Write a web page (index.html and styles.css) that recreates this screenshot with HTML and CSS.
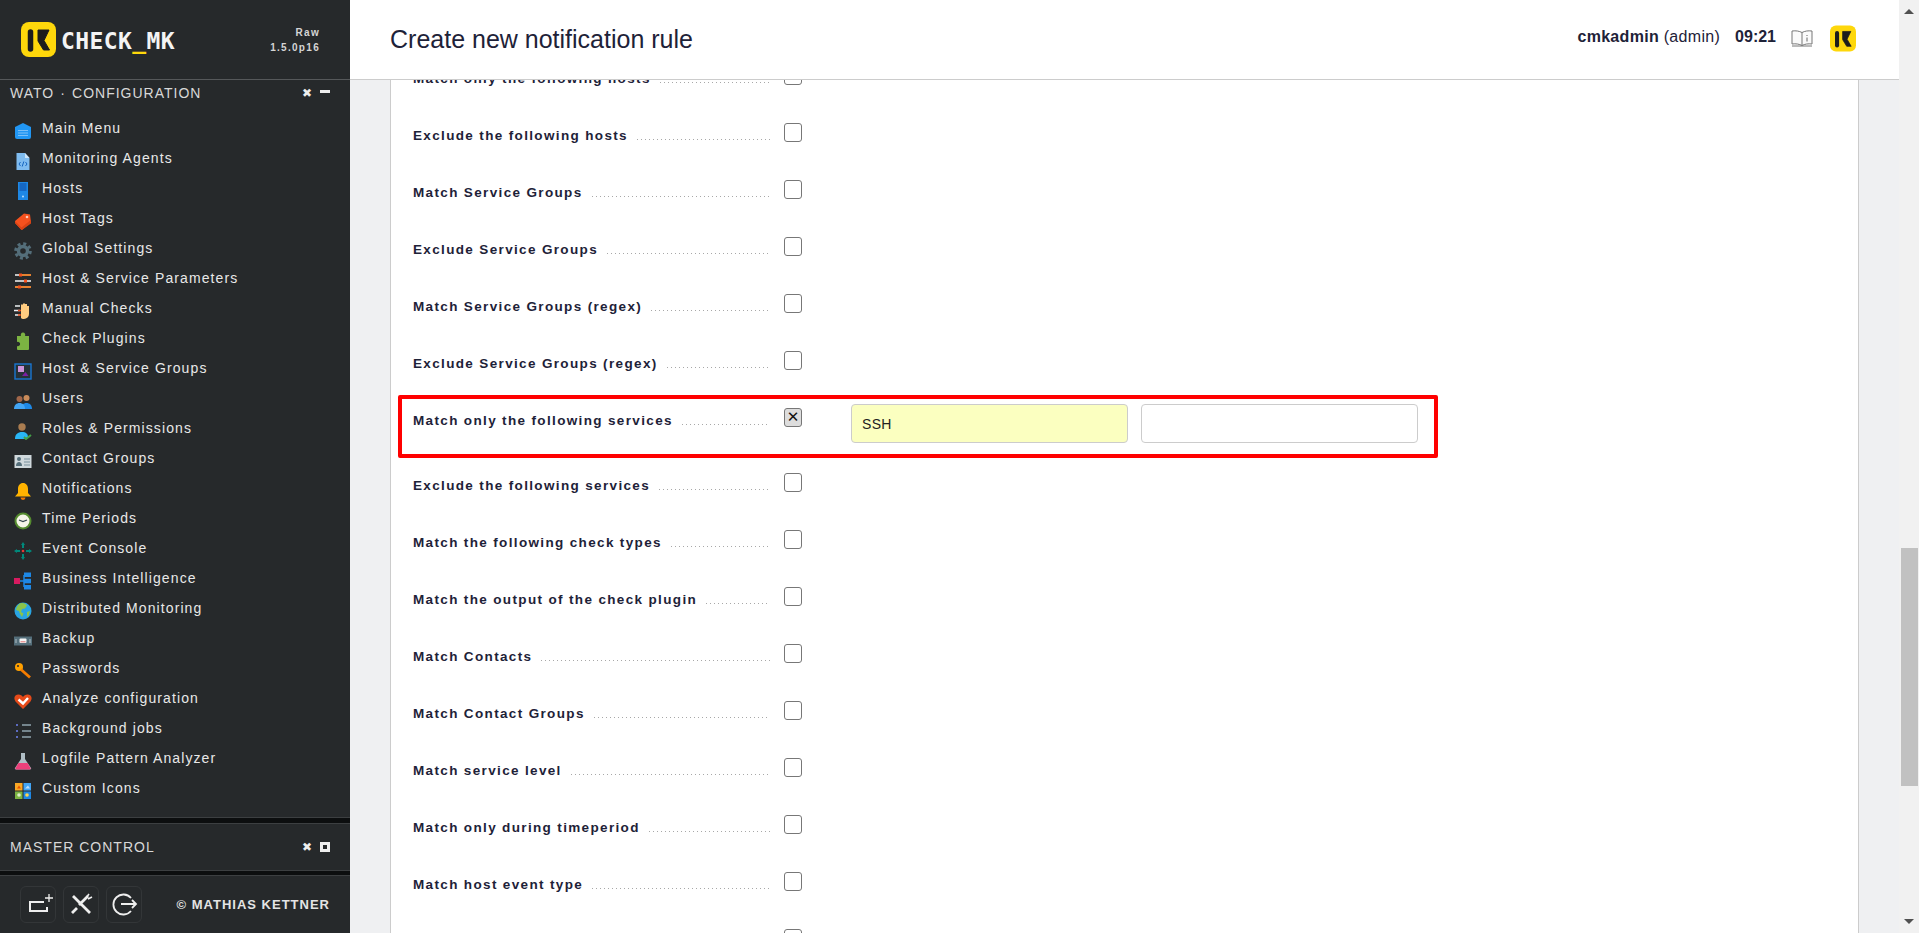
FILE: index.html
```html
<!DOCTYPE html>
<html lang="en">
<head>
  <meta charset="UTF-8" />
  <title>Create new notification rule</title>
  <link rel="stylesheet" href="styles.css">
</head>
<body>
  <aside class="sidebar">
    <div class="side-header">
      <svg class="logo" viewBox="0 0 35 35"><rect width="35" height="35" rx="8" fill="#fed70b"/><path d="M9.500 10v17" stroke="#1c1c1c" stroke-width="5.500" stroke-linecap="round"/><path d="M17 8h11l-5 10.500L28.500 28h-6L17 19z" fill="#1c1c1c" stroke="#1c1c1c" stroke-linejoin="round"/></svg>
      <div class="logo-text">CHECK<span class="logo-under">_</span>MK</div>
      <div class="version">Raw<br>1.5.0p16</div>
    </div>

    <div class="snapin-title">
      <span class="wato-title">WATO · CONFIGURATION</span>
      <span class="snapin-ctrl"><span class="ctrl-x">✖</span><span class="ctrl-min"></span></span>
    </div>

    <ul class="menu">
      <li><svg viewBox="0 0 18 18"><path d="M9 1l8 4v10a2 2 0 0 1-2 2H3a2 2 0 0 1-2-2V5z" fill="#2196f3"/><path d="M4 8.500h10M4 11h10M4 13.500h10" stroke="#7cc0f7"/></svg>Main Menu</li>
      <li><svg viewBox="0 0 18 18"><path d="M2.500 1H11l4.500 5v12h-13z" fill="#7fbcf0"/><path d="M11 1l4.500 5H11z" fill="#cfe6fa"/><path d="M6.500 10L5 12l1.500 2M11.500 10L13 12l-1.500 2M9.800 9.500l-1.600 5" stroke="#1565c0" fill="none"/></svg>Monitoring Agents</li>
      <li><svg viewBox="0 0 18 18"><rect x="4" y="0" width="10" height="18" fill="#1e88e5"/><path d="M5.500 2h7M5.500 4h7M5.500 6h7M5.500 8h7" stroke="#0d47a1"/><circle cx="9" cy="14.500" r="1" fill="#bbdefb"/></svg>Hosts</li>
      <li><svg viewBox="0 0 18 18"><path d="M1 9l9-7.500 6 1 1 8L8.500 17.500a1 1 0 0 1-1.400 0L1 11z" fill="#f4511e"/><path d="M1 9l6.500 6.500L16.800 8l.2 3.500-8.500 6a1 1 0 0 1-1.400 0L1 11z" fill="#d84315"/><circle cx="13" cy="5" r="1.300" fill="#ffccbc"/></svg>Host Tags</li>
      <li><svg viewBox="0 0 18 18"><circle cx="9" cy="9" r="7.300" fill="none" stroke="#546e7a" stroke-width="3" stroke-dasharray="3 2.730"/><circle cx="9" cy="9" r="4.500" fill="none" stroke="#546e7a" stroke-width="3.400"/></svg>Global Settings</li>
      <li><svg viewBox="0 0 18 18"><path d="M1 3h4M8 3h9M1 9h9M13 9h4M1 15h3M7 15h10" stroke="#f5f5f5" stroke-width="1.500"/><path d="M5 3h3M10 9h3M4 15h3" stroke="#f4511e" stroke-width="3"/><path d="M8 3h9M1 15h3M7 15h10" stroke="#ef6c00" stroke-width="1.500"/></svg>Host &amp; Service Parameters</li>
      <li><svg viewBox="0 0 18 18"><path d="M7 6V2.500h2V5V1.500h2V5V2h2v3.500V4h2v8a5 5 0 0 1-5 5H9a3 3 0 0 1-2-1z" fill="#ffcc80"/><path d="M1 4h5M0 8.500h6M1 13h5" stroke="#eceff1" stroke-width="1.500"/><path d="M4 8.500h3M4 13h3" stroke="#e64a19" stroke-width="1.500"/></svg>Manual Checks</li>
      <li><svg viewBox="0 0 18 18"><path d="M7 4a2.300 2.300 0 1 1 4 0h4v13a1 1 0 0 1-1 1H4a1 1 0 0 1-1-1v-3a2.200 2.200 0 1 0 0-4V4z" fill="#7cb342"/></svg>Check Plugins</li>
      <li><svg viewBox="0 0 18 18"><rect x="1" y="2" width="16" height="15" fill="#263238" stroke="#1976d2" stroke-width="1.400"/><rect x="4" y="4" width="6" height="6" fill="#ce93d8"/><path d="M8 14l3.500-4 3 4z" fill="#7b1fa2"/></svg>Host &amp; Service Groups</li>
      <li><svg viewBox="0 0 18 18"><circle cx="5.500" cy="7" r="3" fill="#a1674a"/><circle cx="12.500" cy="6" r="3" fill="#c98b5a"/><path d="M7 17c0-4 2.500-6 5.500-6s5.500 2 5.500 6z" fill="#1e88e5"/><path d="M0 17c0-4 2.500-6 5.500-6S11 13 11 17z" fill="#42a5f5"/></svg>Users</li>
      <li><svg viewBox="0 0 18 18"><circle cx="8" cy="5" r="3.700" fill="#a97c50"/><path d="M1 17c0-5 3-7 7-7s6 2 6 5l-3 2z" fill="#29b6f6"/><path d="M10 15l2 2 5-4" stroke="#43a047" stroke-width="2" fill="none"/></svg>Roles &amp; Permissions</li>
      <li><svg viewBox="0 0 18 18"><rect x="0.500" y="3" width="17" height="13" fill="#cfd8dc"/><circle cx="5" cy="7" r="2" fill="#546e7a"/><path d="M2 14c0-3 1.500-4 3-4s3 1 3 4z" fill="#546e7a"/><path d="M10 7h6M10 10h6M10 13h6" stroke="#78909c"/></svg>Contact Groups</li>
      <li><svg viewBox="0 0 18 18"><path d="M9 1c3 0 5 2.500 5 6v4l3 3.500H1L4 11V7c0-3.500 2-6 5-6z" fill="#ffb300"/><path d="M6.500 15.500h5a2.500 2.500 0 0 1-5 0z" fill="#f57c00"/></svg>Notifications</li>
      <li><svg viewBox="0 0 18 18"><circle cx="9" cy="9" r="7.500" fill="#f5f5e8" stroke="#558b2f" stroke-width="2"/><path d="M5 8l4 1.500 4-1.500" stroke="#37474f" stroke-width="1.300" fill="none"/></svg>Time Periods</li>
      <li><svg viewBox="0 0 18 18"><path d="M9 0l2 3H10v3H8V3H7zM9 18l2-3H10v-3H8v3H7zM0 9l3-2v1h3v2H3v1zM18 9l-3-2v1h-3v2h3v1z" fill="#00897b"/><circle cx="9" cy="9" r="1.300" fill="#e53935"/></svg>Event Console</li>
      <li><svg viewBox="0 0 18 18"><rect x="0" y="6" width="6" height="6" fill="#d81b60"/><path d="M6 9h4M10 3v12" stroke="#1e88e5" stroke-width="1.500"/><rect x="10" y="0.500" width="7" height="4.500" fill="#1e88e5"/><rect x="10" y="6.800" width="7" height="4.500" fill="#1e88e5"/><rect x="10" y="13" width="7" height="4.500" fill="#1e88e5"/></svg>Business Intelligence</li>
      <li><svg viewBox="0 0 18 18"><circle cx="9" cy="9" r="8.500" fill="#29a5e3"/><path d="M6 1.500c3-1 6 0 7 2l-2 3-3 .5-1 3 2.500 1.500L8 15l-2-3-1-3-3-1C2.500 5 4 2.500 6 1.500zM13 10l3-1-1 4-2 2z" fill="#8bc34a"/></svg>Distributed Monitoring</li>
      <li><svg viewBox="0 0 18 18"><rect x="0" y="4.500" width="18" height="9" fill="#546e7a"/><rect x="5.500" y="6.500" width="7" height="4.500" rx="1" fill="#f5f5f5"/><path d="M6.500 9.800h5" stroke="#e57373"/><path d="M2 7v4M16 7v4" stroke="#b0bec5"/></svg>Backup</li>
      <li><svg viewBox="0 0 18 18"><circle cx="5" cy="5" r="4" fill="#ffa000"/><circle cx="4" cy="4" r="1" fill="#26292b"/><path d="M7 7.500l9 8" stroke="#f57c00" stroke-width="2.800"/></svg>Passwords</li>
      <li><svg viewBox="0 0 18 18"><path d="M9 17L1.500 9.500C-1 6 1 2.500 4.500 2.500 6.500 2.500 8 3.500 9 5c1-1.500 2.500-2.500 4.500-2.500C17 2.500 19 6 16.500 9.500z" fill="#e64a19"/><path d="M4.500 7.500L9 11.500 14 6" stroke="#fff" stroke-width="2.400" fill="none"/></svg>Analyze configuration</li>
      <li><svg viewBox="0 0 18 18"><path d="M2 2h2v2H2zM2 8h2v2H2zM2 14h2v2H2z" fill="#5c6bc0"/><path d="M8 3h9M8 9h9M8 15h9" stroke="#90a4ae" stroke-width="1.400"/></svg>Background jobs</li>
      <li><svg viewBox="0 0 18 18"><path d="M7 1h4v6l6 9a1 1 0 0 1-1 1.500H2A1 1 0 0 1 1 16l6-9z" fill="#b0bec5"/><path d="M4.500 11h9l3 5a1 1 0 0 1-1 1.500h-13A1 1 0 0 1 1.500 16z" fill="#ec407a"/></svg>Logfile Pattern Analyzer</li>
      <li><svg viewBox="0 0 18 18"><rect x="1" y="1" width="7.500" height="7.500" fill="#f9a825"/><rect x="9.500" y="1" width="7.500" height="7.500" fill="#42a5f5"/><rect x="1" y="9.500" width="7.500" height="7.500" fill="#7cb342"/><rect x="9.500" y="9.500" width="7.500" height="7.500" fill="#1e88e5"/><circle cx="5" cy="13" r="1.800" fill="#dcedc8"/><circle cx="13" cy="13" r="1.800" fill="#ffd54f"/><path d="M3 6.500l2-3 2 3z" fill="#e65100"/><path d="M11 6.500l3-3 2 3z" fill="#bbdefb"/></svg>Custom Icons</li>
    </ul>

    <div class="side-bottom">
      <div class="band"></div>
      <div class="snapin-title master">
        <span>MASTER CONTROL</span>
        <span class="snapin-ctrl"><span class="ctrl-x">✖</span><span class="ctrl-max"></span></span>
      </div>
      <div class="band band-thin"></div>
      <div class="side-footer">
        <div class="foot-btn"><svg viewBox="0 0 34 35"><path d="M23 15H9v9h17v-4" fill="none" stroke="#eee" stroke-width="2"/><path d="M28 7v8M24 11h8" stroke="#eee" stroke-width="1.300"/></svg></div>
        <div class="foot-btn"><svg viewBox="0 0 34 35"><path d="M9 9l17 17M24 9L15 18M13 21l-5 5" fill="none" stroke="#eee" stroke-width="2.800"/><path d="M22 11l3-4M24 12l4-2" stroke="#eee" stroke-width="1.600"/></svg></div>
        <div class="foot-btn"><svg viewBox="0 0 34 35"><path d="M24 11a10 10 0 1 0 0 13" fill="none" stroke="#eee" stroke-width="1.800"/><path d="M14 17h15M25 13l4 4-4 4" fill="none" stroke="#eee" stroke-width="1.800"/></svg></div>
        <div class="copyright">© MATHIAS KETTNER</div>
      </div>
    </div>
  </aside>

  <main class="main">
    <div class="main-col">
      <header class="top">
        <h1>Create new notification rule</h1>
        <div class="top-right">
          <span class="user"><b>cmkadmin</b> (admin)</span>
          <b class="clock">09:21</b>
          <svg class="book" viewBox="0 0 22 17"><path d="M1 1c4-.500 7 0 10 1.500C14 1 17 .500 21 1v13c-4-.500-7 0-10 1.500C8 14 5 13.500 1 14z" fill="#fafafa" stroke="#777"/><path d="M11 2.500v13M1 16h20" stroke="#777"/><path d="M16 5v1M16 7.500v4" stroke="#666"/></svg>
          <svg class="top-logo" viewBox="0 0 35 35"><rect width="35" height="35" rx="8" fill="#fed70b"/><path d="M9.500 10v17" stroke="#1c1c1c" stroke-width="5.500" stroke-linecap="round"/><path d="M17 8h11l-5 10.500L28.500 28h-6L17 19z" fill="#1c1c1c" stroke="#1c1c1c" stroke-linejoin="round"/></svg>
        </div>
      </header>

      <div class="content">
        <div class="panel">
          <div class="row"><div class="legend"><span>Match only the following hosts</span><i></i></div><input class="cb" type="checkbox"></div>
          <div class="row"><div class="legend"><span>Exclude the following hosts</span><i></i></div><input class="cb" type="checkbox"></div>
          <div class="row"><div class="legend"><span>Match Service Groups</span><i></i></div><input class="cb" type="checkbox"></div>
          <div class="row"><div class="legend"><span>Exclude Service Groups</span><i></i></div><input class="cb" type="checkbox"></div>
          <div class="row"><div class="legend"><span>Match Service Groups (regex)</span><i></i></div><input class="cb" type="checkbox"></div>
          <div class="row"><div class="legend"><span>Exclude Service Groups (regex)</span><i></i></div><input class="cb" type="checkbox"></div>
          <div class="row row-open">
            <div class="legend"><span>Match only the following services</span><i></i></div>
            <input class="cb" type="checkbox" checked>
            <div class="fields">
              <input class="txt txt-filled" type="text" value="SSH">
              <input class="txt" type="text">
            </div>
            <div class="highlight"></div>
          </div>
          <div class="row"><div class="legend"><span>Exclude the following services</span><i></i></div><input class="cb" type="checkbox"></div>
          <div class="row"><div class="legend"><span>Match the following check types</span><i></i></div><input class="cb" type="checkbox"></div>
          <div class="row"><div class="legend"><span>Match the output of the check plugin</span><i></i></div><input class="cb" type="checkbox"></div>
          <div class="row"><div class="legend"><span>Match Contacts</span><i></i></div><input class="cb" type="checkbox"></div>
          <div class="row"><div class="legend"><span>Match Contact Groups</span><i></i></div><input class="cb" type="checkbox"></div>
          <div class="row"><div class="legend"><span>Match service level</span><i></i></div><input class="cb" type="checkbox"></div>
          <div class="row"><div class="legend"><span>Match only during timeperiod</span><i></i></div><input class="cb" type="checkbox"></div>
          <div class="row"><div class="legend"><span>Match host event type</span><i></i></div><input class="cb" type="checkbox"></div>
          <div class="row"><div class="legend"></div><input class="cb" type="checkbox"></div>
        </div>
      </div>
    </div>

    <div class="scrollbar">
      <span class="arrow-up"></span>
      <div class="thumb"></div>
      <span class="arrow-down"></span>
    </div>
  </main>
</body>
</html>
```

FILE: styles.css
```css
* {
  box-sizing: border-box;
}
html, body {
  height: 100%;
}
body {
  margin: 0;
  display: flex;
  height: 933px;
  overflow: hidden;
  font-family: "Liberation Sans", Arial, sans-serif;
  color: #1e2238;
  background: #eff0f2;
}

/* sidebar */
.sidebar {
  width: 350px;
  flex: none;
  display: flex;
  flex-direction: column;
  background: #26292b;
  color: #e8e8e8;
}
.side-header {
  height: 80px;
  flex: none;
  display: flex;
  align-items: flex-start;
  padding: 22px 30px 0 21px;
  border-bottom: 1px solid #55585a;
}
.logo {
  width: 35px;
  height: 35px;
  flex: none;
}
.logo-text {
  margin: 6px 0 0 5px;
  font-family: "DejaVu Sans Mono", monospace;
  font-weight: bold;
  font-size: 23px;
  line-height: 26px;
  letter-spacing: 0.4px;
  color: #f4f4f4;
}
.logo-under {
  color: #fed70b;
}
.version {
  margin-left: auto;
  margin-top: 3px;
  text-align: right;
  font-size: 10px;
  font-weight: bold;
  line-height: 15px;
  letter-spacing: 1.3px;
  color: #d5d5d5;
}
.snapin-title {
  height: 26px;
  flex: none;
  display: flex;
  align-items: center;
  justify-content: space-between;
  padding: 0 20px 0 10px;
  font-size: 14px;
  letter-spacing: 1px;
  color: #d8d8d8;
}
.wato-title {
  word-spacing: 1.2px;
}
.snapin-ctrl {
  display: flex;
  align-items: center;
  gap: 8px;
}
.ctrl-x {
  font-family: "DejaVu Sans", sans-serif;
  font-size: 12px;
  line-height: 12px;
  letter-spacing: 0;
  color: #eee;
}
.ctrl-min {
  width: 10px;
  height: 3px;
  background: #eee;
  margin-bottom: 3px;
}
.ctrl-max {
  width: 10px;
  height: 10px;
  border: 3px solid #eee;
}
.menu {
  list-style: none;
  margin: 0;
  padding: 7px 0 0 14px;
}
.menu li {
  height: 30px;
  display: flex;
  align-items: center;
  gap: 10px;
  font-size: 14px;
  letter-spacing: 1.1px;
}
.menu svg {
  width: 18px;
  height: 18px;
  flex: none;
  margin-top: 6px;
}
.side-bottom {
  margin-top: auto;
}
.band {
  height: 7px;
  background: #0c0e0f;
  border-top: 1px solid #3c3f41;
  border-bottom: 1px solid #3c3f41;
}
.band-thin {
  height: 6px;
}
.master {
  height: 46px;
}
.side-footer {
  height: 57px;
  display: flex;
  align-items: center;
  padding: 0 20px 0 20px;
}
.foot-btn {
  width: 36px;
  height: 37px;
  margin-right: 7px;
  border: 1px solid #333638;
  border-radius: 6px;
}
.foot-btn svg {
  display: block;
  width: 34px;
  height: 35px;
}
.copyright {
  margin-left: auto;
  font-size: 13px;
  font-weight: bold;
  letter-spacing: 1px;
  color: #e4e4e4;
}

/* main area */
.main {
  flex: 1;
  display: flex;
  min-width: 0;
}
.main-col {
  flex: 1;
  display: flex;
  flex-direction: column;
  min-width: 0;
}
.top {
  height: 80px;
  flex: none;
  display: flex;
  align-items: center;
  justify-content: space-between;
  padding: 0 43px 0 40px;
  background: #fff;
  border-bottom: 1px solid #ccc;
}
.top h1 {
  margin: 0;
  font-size: 25px;
  font-weight: normal;
}
.top-right {
  display: flex;
  align-items: center;
  font-size: 16px;
}
.user {
  margin-bottom: 6px;
  letter-spacing: 0.3px;
}
.clock {
  margin: 0 15px 6px 15px;
}
.book {
  width: 22px;
  height: 17px;
  margin-bottom: 3px;
}
.top-logo {
  width: 26px;
  height: 27px;
  margin-left: 17px;
  margin-bottom: 2px;
}
.content {
  flex: 1;
  overflow: hidden;
  padding: 0 40px;
}
.panel {
  margin-top: -27px;
  padding-left: 22px;
  background: #fff;
  border-left: 1px solid #ccc;
  border-right: 1px solid #ccc;
}
.row {
  position: relative;
  display: flex;
  align-items: flex-start;
  height: 57px;
  padding-top: 13px;
}
.row-open {
  height: 65px;
}
.legend {
  width: 357px;
  flex: none;
  display: flex;
  align-items: baseline;
  gap: 9px;
  padding-top: 5px;
  line-height: 16px;
  font-size: 13.5px;
  font-weight: bold;
  letter-spacing: 1.35px;
  white-space: nowrap;
}
.legend i {
  flex: 1;
  height: 1px;
  background: repeating-linear-gradient(90deg, #a8a8a8 0 1px, transparent 1px 4px);
}
.cb {
  appearance: none;
  position: relative;
  flex: none;
  width: 18px;
  height: 19px;
  margin: 0 0 0 14px;
  background: #fff;
  border: 1px solid #777;
  border-radius: 3px;
}
.cb:checked {
  background: #ddd;
}
.cb:checked::after {
  content: "✕";
  position: absolute;
  inset: 0;
  text-align: center;
  font-family: "DejaVu Sans", sans-serif;
  font-size: 15px;
  line-height: 17px;
  color: #111;
}
.fields {
  display: flex;
  gap: 13px;
  margin: -4px 0 0 49px;
}
.txt {
  width: 277px;
  height: 39px;
  padding: 0 10px;
  background: #fff;
  border: 1px solid #ccc;
  border-radius: 4px;
  font: 14px "Liberation Sans", Arial, sans-serif;
  letter-spacing: 0.3px;
  color: #222;
}
.txt-filled {
  background: #fbffc0;
}
.highlight {
  position: absolute;
  left: -15px;
  top: 0;
  width: 1040px;
  height: 63px;
  border: 4px solid #f00;
  border-radius: 2px;
  pointer-events: none;
}

/* page scrollbar */
.scrollbar {
  width: 20px;
  flex: none;
  position: relative;
  background: #f1f1f1;
}
.arrow-up, .arrow-down {
  position: absolute;
  left: 5px;
  width: 0;
  height: 0;
  border-left: 5px solid transparent;
  border-right: 5px solid transparent;
}
.arrow-up {
  top: 9px;
  border-bottom: 5px solid #505050;
}
.arrow-down {
  bottom: 9px;
  border-top: 5px solid #505050;
}
.thumb {
  width: 17px;
  height: 238px;
  margin: 548px 0 0 2px;
  background: #c1c1c1;
}
```
